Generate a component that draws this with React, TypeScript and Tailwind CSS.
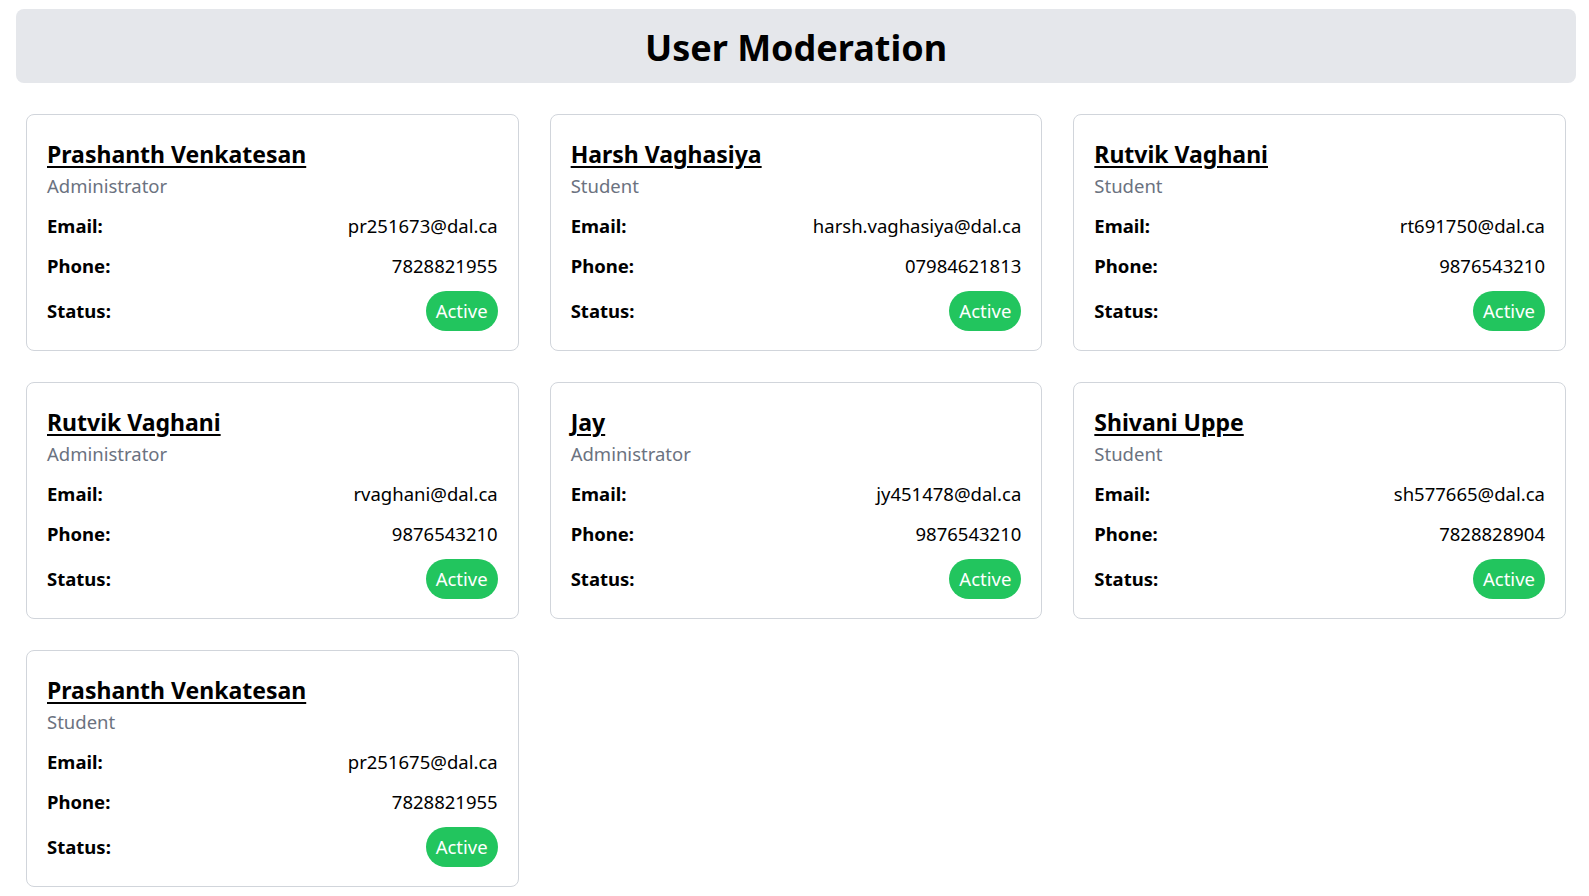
import { FC } from 'react';

interface IUser {
  name: string;
  role: string;
  email: string;
  phone: string;
  status: string;
}

const USERS: IUser[] = [
  { name: 'Prashanth Venkatesan', role: 'Administrator', email: 'pr251673@dal.ca', phone: '7828821955', status: 'Active' },
  { name: 'Harsh Vaghasiya', role: 'Student', email: 'harsh.vaghasiya@dal.ca', phone: '07984621813', status: 'Active' },
  { name: 'Rutvik Vaghani', role: 'Student', email: 'rt691750@dal.ca', phone: '9876543210', status: 'Active' },
  { name: 'Rutvik Vaghani', role: 'Administrator', email: 'rvaghani@dal.ca', phone: '9876543210', status: 'Active' },
  { name: 'Jay', role: 'Administrator', email: 'jy451478@dal.ca', phone: '9876543210', status: 'Active' },
  { name: 'Shivani Uppe', role: 'Student', email: 'sh577665@dal.ca', phone: '7828828904', status: 'Active' },
  { name: 'Prashanth Venkatesan', role: 'Student', email: 'pr251675@dal.ca', phone: '7828821955', status: 'Active' },
];

const Row: FC<{ label: string; children: React.ReactNode; className?: string }> = ({
  label,
  children,
  className = '',
}) => {
  return (
    <div className={`flex items-center justify-between ${className}`}>
      <span className="font-bold">{label}</span>
      {children}
    </div>
  );
};

const UserCard: FC<{ user: IUser }> = ({ user }) => {
  return (
    <div className="border border-[#d1d5db] rounded-lg px-5 pt-5 pb-[19px] bg-white">
      <h2 className="text-[23px] font-bold underline underline-offset-[3px] leading-8 mt-[3px]">
        {user.name}
      </h2>
      <p className="text-[18.5px] leading-7 text-[#6b7280] mt-0.5">{user.role}</p>
      <div className="mt-3 text-[18.5px] leading-7">
        <Row label="Email:">
          <span>{user.email}</span>
        </Row>
        <Row label="Phone:" className="mt-3">
          <span>{user.phone}</span>
        </Row>
        <Row label="Status:" className="mt-[11px]">
          <span className="bg-[#22c55e] text-white rounded-full px-2.5 py-1.5">{user.status}</span>
        </Row>
      </div>
    </div>
  );
};

export default function App() {
  return (
    <div className="min-h-screen bg-white text-black font-['Segoe_UI','Noto_Sans',sans-serif] pt-[9px] pl-4 pr-[13px]">
      <header className="bg-[#e5e7eb] rounded-lg h-[74px] flex items-center justify-center">
        <h1 className="text-4xl font-bold pt-1">User Moderation</h1>
      </header>
      <div className="px-[10px] mt-[31px] grid grid-cols-3 gap-x-[31px] gap-y-[31px]">
        {USERS.map((user, index) => (
          <UserCard key={index} user={user} />
        ))}
      </div>
    </div>
  );
}
